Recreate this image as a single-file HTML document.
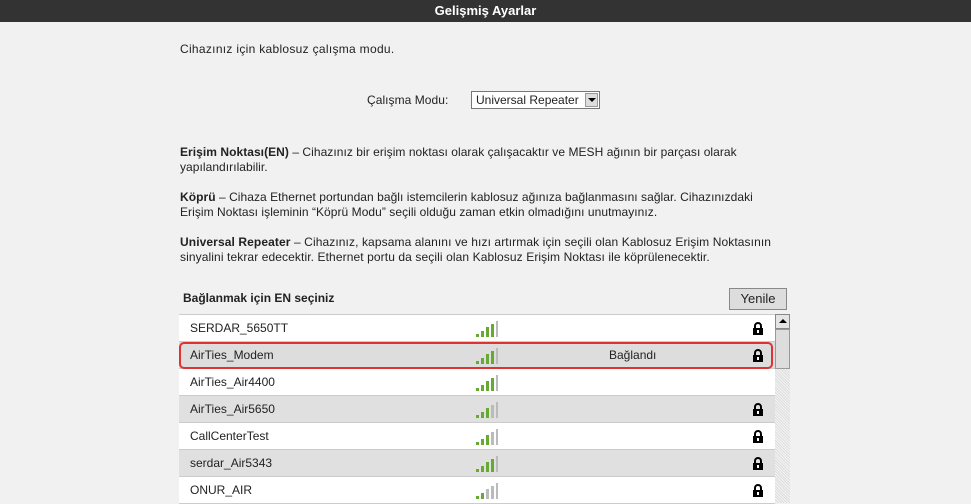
<!DOCTYPE html>
<html><head><meta charset="utf-8"><style>
body{margin:0;width:971px;height:503px;background:#f1f1f1;font-family:"Liberation Sans",sans-serif;font-size:12px;color:#222;overflow:hidden;position:relative}
.hdr{position:absolute;left:0;top:0;width:971px;height:22px;background:#333;color:#fff;font-weight:bold;font-size:13px;text-align:center;line-height:22px}
.t{position:absolute;left:180px;white-space:nowrap;letter-spacing:0.05px;line-height:15px}
.sel{position:absolute;left:471px;top:91px;width:129px;height:18px;background:#fff;border:1px solid #777;box-sizing:border-box;font-size:12px;line-height:16px;padding-left:4px}
.sel .ar{position:absolute;right:1px;top:1px;width:13px;height:14px;background:#ddd;border:1px solid #999;box-sizing:border-box}
.sel .ar:after{content:"";position:absolute;left:2px;top:4px;border-left:4px solid transparent;border-right:4px solid transparent;border-top:4px solid #000}
.btn{position:absolute;left:729px;top:288px;width:58px;height:22px;background:#ddd;border:1px solid #888;box-sizing:border-box;text-align:center;line-height:20px;font-size:13px}
.list{position:absolute;left:179px;top:314px;width:596px;height:189px;border-top:1px solid #ccc}
.row{position:absolute;left:0;width:596px;height:26px;line-height:26px;border-bottom:1px solid #ccc}
.row .n{position:absolute;left:11px}
.g{background:#e0e0e0}
.sig{position:absolute;left:297px;top:6px}
.lock{position:absolute;left:574px;top:7px}
.sb{position:absolute;left:775px;top:314px;width:15px;height:189px;background:repeating-linear-gradient(45deg,#ddd 0 1px,#f4f4f4 1px 2px)}
.hl{position:absolute;left:179px;top:342px;width:594px;height:27px;border:2px solid #d33;border-radius:5px;box-sizing:border-box}
</style></head><body>
<div class="hdr">Gelişmiş Ayarlar</div>
<div class="t" style="top:42px;letter-spacing:0.3px">Cihazınız için kablosuz çalışma modu.</div>
<div class="t" style="left:367px;top:93px">Çalışma Modu:</div>
<div class="sel">Universal Repeater<div class="ar"></div></div>
<div class="t" style="top:145px"><b>Erişim Noktası(EN)</b> – Cihazınız bir erişim noktası olarak çalışacaktır ve MESH ağının bir parçası olarak<br>yapılandırılabilir.</div>
<div class="t" style="top:190px"><b>Köprü</b> – Cihaza Ethernet portundan bağlı istemcilerin kablosuz ağınıza bağlanmasını sağlar. Cihazınızdaki<br>Erişim Noktası işleminin “Köprü Modu” seçili olduğu zaman etkin olmadığını unutmayınız.</div>
<div class="t" style="top:235px;letter-spacing:0.1px"><b>Universal Repeater</b> – Cihazınız, kapsama alanını ve hızı artırmak için seçili olan Kablosuz Erişim Noktasının<br>sinyalini tekrar edecektir. Ethernet portu da seçili olan Kablosuz Erişim Noktası ile köprülenecektir.</div>
<div class="t" style="left:183px;top:291px;font-weight:bold;letter-spacing:0">Bağlanmak için EN seçiniz</div>
<div class="btn">Yenile</div>
<svg width="0" height="0" style="position:absolute"><defs>
<g id="s4"><rect x="0" y="13" width="3" height="3" fill="#6a3"/><rect x="5" y="10" width="3" height="6" fill="#6a3"/><rect x="10" y="6" width="3" height="10" fill="#6a3"/><rect x="15" y="3" width="3" height="13" fill="#6a3"/><rect x="20" y="0" width="2" height="16" fill="#bbb"/></g>
<g id="s3"><rect x="0" y="13" width="3" height="3" fill="#6a3"/><rect x="5" y="10" width="3" height="6" fill="#6a3"/><rect x="10" y="6" width="3" height="10" fill="#6a3"/><rect x="15" y="3" width="3" height="13" fill="#bbb"/><rect x="20" y="0" width="2" height="16" fill="#bbb"/></g>
<g id="s2"><rect x="0" y="13" width="3" height="3" fill="#6a3"/><rect x="5" y="10" width="3" height="6" fill="#6a3"/><rect x="10" y="6" width="3" height="10" fill="#bbb"/><rect x="15" y="3" width="3" height="13" fill="#bbb"/><rect x="20" y="0" width="2" height="16" fill="#bbb"/></g>
<g id="lk"><path d="M2 6V4a3 3 0 0 1 6 0v2" fill="none" stroke="#000" stroke-width="2"/><rect x="0" y="6" width="10" height="7" fill="#000"/><rect x="4" y="8" width="2" height="3" fill="#fff"/></g>
</defs></svg>
<div class="list">
<div class="row" style="top:0;background:#fff"><span class="n">SERDAR_5650TT</span><svg class="sig" width="22" height="16"><use href="#s4"/></svg><svg class="lock" width="10" height="13"><use href="#lk"/></svg></div>
<div class="row g" style="top:27px;background:#ddd"><span class="n">AirTies_Modem</span><svg class="sig" width="22" height="16"><use href="#s4"/></svg><span style="position:absolute;left:430px">Bağlandı</span><svg class="lock" width="10" height="13"><use href="#lk"/></svg></div>
<div class="row" style="top:54px;background:#fff"><span class="n">AirTies_Air4400</span><svg class="sig" width="22" height="16"><use href="#s4"/></svg></div>
<div class="row g" style="top:81px"><span class="n">AirTies_Air5650</span><svg class="sig" width="22" height="16"><use href="#s3"/></svg><svg class="lock" width="10" height="13"><use href="#lk"/></svg></div>
<div class="row" style="top:108px;background:#fff"><span class="n">CallCenterTest</span><svg class="sig" width="22" height="16"><use href="#s3"/></svg><svg class="lock" width="10" height="13"><use href="#lk"/></svg></div>
<div class="row g" style="top:135px"><span class="n">serdar_Air5343</span><svg class="sig" width="22" height="16"><use href="#s4"/></svg><svg class="lock" width="10" height="13"><use href="#lk"/></svg></div>
<div class="row" style="top:162px;background:#fff"><span class="n">ONUR_AIR</span><svg class="sig" width="22" height="16"><use href="#s2"/></svg><svg class="lock" width="10" height="13"><use href="#lk"/></svg></div>
</div>
<div class="hl"></div>
<div class="sb"><div style="position:absolute;left:0;top:0;width:15px;height:15px;background:#e4e4e4;border:1px solid #888;box-sizing:border-box"><div style="position:absolute;left:3px;top:4px;border-left:4px solid transparent;border-right:4px solid transparent;border-bottom:4px solid #000"></div></div><div style="position:absolute;left:0;top:15px;width:15px;height:40px;background:#ddd;border:1px solid #999;box-sizing:border-box"></div></div>
</body></html>
